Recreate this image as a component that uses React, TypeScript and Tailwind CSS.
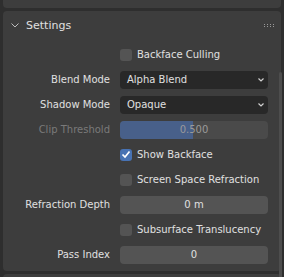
import React from "react";

const FONT = "font-['DejaVu_Sans',sans-serif]";

function Chevron({ className = "" }: { className?: string }) {
  return (
    <svg width="8" height="5" viewBox="0 0 8 5" className={className}>
      <path d="M0.5 0.5 L4 4 L7.5 0.5" fill="none" stroke="#bdbdbd" strokeWidth="1" />
    </svg>
  );
}

function SmallChevron() {
  return (
    <svg width="6" height="4" viewBox="0 0 6 4">
      <path d="M0.5 0.5 L3 3 L5.5 0.5" fill="none" stroke="#d0d0d0" strokeWidth="1.2" />
    </svg>
  );
}

function Checkbox({ checked, label }: { checked?: boolean; label: string }) {
  return (
    <div className="flex h-[25px] items-center">
      <div className="w-[117px]" />
      <div
        className={`flex h-[12px] w-[12px] items-center justify-center rounded-[3px] ${
          checked ? "bg-[#4772b3]" : "bg-[#545454]"
        }`}
      >
        {checked && (
          <svg width="10" height="9" viewBox="0 0 10 9">
            <path d="M1.5 4.5 L4 7 L8.5 1.5" fill="none" stroke="#ffffff" strokeWidth="1.7" />
          </svg>
        )}
      </div>
      <span className="ml-[5px] text-[#e0e0e0]">{label}</span>
    </div>
  );
}

function Row({ label, dim, children }: { label: string; dim?: boolean; children: React.ReactNode }) {
  return (
    <div className="flex h-[25px] items-center">
      <div className={`w-[107px] text-right ${dim ? "text-[#7a7a7a]" : "text-[#e0e0e0]"}`}>{label}</div>
      <div className="ml-[10px] h-[18px] w-[148px]">{children}</div>
    </div>
  );
}

function Dropdown({ value }: { value: string }) {
  return (
    <div className="flex h-full items-center justify-between rounded-[4px] bg-[#282828] pl-[7px] pr-[4px] text-[#e0e0e0]">
      <span>{value}</span>
      <SmallChevron />
    </div>
  );
}

function NumberField({ value }: { value: string }) {
  return (
    <div className="flex h-full items-center justify-center rounded-[4px] bg-[#545454] text-[#e0e0e0]">{value}</div>
  );
}

export default function App() {
  return (
    <div className={`relative h-[277px] w-[284px] overflow-hidden bg-[#2e2e2e] text-[10px] leading-none ${FONT}`}>
      {/* collapsed panel above */}
      <div className="mx-[3px] -mt-[18px] flex h-[26px] items-center rounded-b-[4px] bg-[#3d3d3d] pl-[8px] pt-[3px] text-[#e0e0e0]">
        <Chevron className="-rotate-90" />
        <span className="ml-[15px]">Volume</span>
      </div>

      <div className="mx-[3px] mt-[3px] h-[260px] rounded-[4px] bg-[#3d3d3d]">
        <div className="flex h-[26px] items-center pl-[8px] pr-[7px] pt-[3px]">
          <Chevron />
          <span className="ml-[7px] text-[11px] text-[#e0e0e0]">Settings</span>
          <div className="ml-auto grid grid-cols-4 gap-x-[2px] gap-y-[1px]">
            {Array.from({ length: 8 }).map((_, i) => (
              <div key={i} className="h-[1px] w-[1px] bg-[#9a9a9a]" />
            ))}
          </div>
        </div>
        <div className="pt-[5px]">
          <Checkbox label="Backface Culling" />
          <Row label="Blend Mode">
            <Dropdown value="Alpha Blend" />
          </Row>
          <Row label="Shadow Mode">
            <Dropdown value="Opaque" />
          </Row>
          <Row label="Clip Threshold" dim>
            <div className="relative flex h-full items-center justify-center overflow-hidden rounded-[4px] bg-[#4a4a4a]">
              <div className="absolute inset-y-0 left-0 w-[49%] bg-[#48608a]" />
              <span className="relative text-[#9a9a9a]">0.500</span>
            </div>
          </Row>
          <Checkbox checked label="Show Backface" />
          <Checkbox label="Screen Space Refraction" />
          <Row label="Refraction Depth">
            <NumberField value="0 m" />
          </Row>
          <Checkbox label="Subsurface Translucency" />
          <Row label="Pass Index">
            <NumberField value="0" />
          </Row>
        </div>
      </div>

      <div className="mx-[3px] mt-[3px] h-[26px] rounded-t-[4px] bg-[#3d3d3d]" />

      {/* scrollbar */}
      <div className="absolute right-[2px] top-[72px] h-[220px] w-[3px] rounded-full bg-[#4d4d4d]" />
    </div>
  );
}
